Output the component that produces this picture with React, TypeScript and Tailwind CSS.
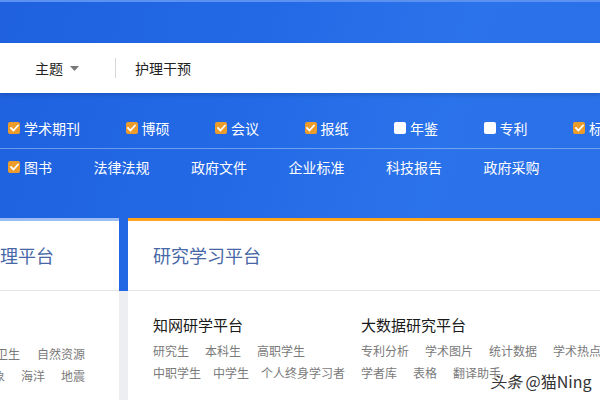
import React from "react";

const font = { fontFamily: '"Noto Sans CJK SC", "Noto Sans", sans-serif' };

function Check({ on }: { on: boolean }) {
  return on ? (
    <span className="flex h-[12px] w-[12px] items-center justify-center rounded-[2px] bg-[#ec9c2b]">
      <svg width="9" height="8" viewBox="0 0 9 8">
        <path d="M1 4 L3.5 6.5 L8 1.5" fill="none" stroke="#fff" strokeWidth="1.8" strokeLinecap="round" strokeLinejoin="round" />
      </svg>
    </span>
  ) : (
    <span className="h-[12px] w-[12px] rounded-[2px] bg-white" />
  );
}

const row1: [string, boolean][] = [
  ["学术期刊", true],
  ["博硕", true],
  ["会议", true],
  ["报纸", true],
  ["年鉴", false],
  ["专利", false],
  ["标准", true],
];

const row2: [string, boolean | null][] = [
  ["图书", true],
  ["法律法规", null],
  ["政府文件", null],
  ["企业标准", null],
  ["科技报告", null],
  ["政府采购", null],
];

export default function App() {
  return (
    <div className="relative h-[400px] w-[600px] overflow-hidden bg-[#eceef2]" style={font}>
      <div className="h-[291px] border-t-[2px] border-t-[#5b92f2] bg-[linear-gradient(105deg,#1f61df_0%,#2369e6_40%,#2b73ea_70%,#2a70e8_100%)] pt-[41px]">
        <div className="flex h-[50px] items-center bg-white shadow-[0_2px_4px_rgba(0,0,0,0.15)]">
          <span className="ml-[35px] text-[14px] text-[#222]">主题</span>
          <svg className="ml-[7px]" width="9" height="5" viewBox="0 0 9 5">
            <path d="M0 0 H9 L4.5 5 Z" fill="#777" />
          </svg>
          <span className="ml-[36px] h-[20px] w-px bg-[#d8d8d8]" />
          <span className="ml-[19px] text-[14px] text-[#222]">护理干预</span>
        </div>
        <div className="mt-[24px] flex h-[22px] items-center gap-[45.5px] whitespace-nowrap pl-[8px] text-[14px] text-white">
          {row1.map(([t, on]) => (
            <span key={t} className="flex shrink-0 items-center gap-[4px]">
              <Check on={on} />
              <span>{t}</span>
            </span>
          ))}
        </div>
        <div className="mt-[9px] h-px bg-[rgba(255,255,255,0.35)]" />
        <div className="mt-[7px] flex h-[22px] items-center gap-[41.5px] whitespace-nowrap pl-[8px] text-[14px] text-white">
          {row2.map(([t, on]) => (
            <span key={t} className="flex shrink-0 items-center gap-[4px]">
              {on !== null && <Check on={on} />}
              <span>{t}</span>
            </span>
          ))}
        </div>
      </div>

      <div className="-mt-[73px] flex h-[255px] gap-[9px]">
        <div className="w-[119px] shrink-0 overflow-hidden border-t-[3px] border-t-[#9cbdf4] bg-white">
          <div className="flex h-[70px] items-center border-b border-[#e2e4e8] whitespace-nowrap">
            <span className="-ml-[18px] text-[18px] text-[#4767a6]">管理平台</span>
          </div>
          <div className="pt-[52px] text-[12px] leading-[22px] text-[#7a7a7a] whitespace-nowrap">
            <div className="-ml-[4px] flex gap-[17px]">
              <span>卫生</span>
              <span>自然资源</span>
            </div>
            <div className="-ml-[19px] flex gap-[16px]">
              <span>气象</span>
              <span>海洋</span>
              <span>地震</span>
            </div>
          </div>
        </div>
        <div className="flex-1 border-t-[3px] border-t-[#ffa31a] bg-white">
          <div className="flex h-[70px] items-center border-b border-[#e2e4e8] pl-[25px]">
            <span className="text-[18px] text-[#4767a6]">研究学习平台</span>
          </div>
          <div className="flex pl-[25px] pt-[22px] whitespace-nowrap">
            <div className="w-[208px] shrink-0">
              <div className="text-[15px] leading-[24px] text-[#1a1a1a]">知网研学平台</div>
              <div className="mt-[3px] text-[12px] leading-[22px] text-[#7a7a7a]">
                <div className="flex gap-[16px]">
                  <span>研究生</span>
                  <span>本科生</span>
                  <span>高职学生</span>
                </div>
                <div className="flex gap-[12px]">
                  <span>中职学生</span>
                  <span>中学生</span>
                  <span>个人终身学习者</span>
                </div>
              </div>
            </div>
            <div className="shrink-0">
              <div className="text-[15px] leading-[24px] text-[#1a1a1a]">大数据研究平台</div>
              <div className="mt-[3px] text-[12px] leading-[22px] text-[#7a7a7a]">
                <div className="flex gap-[16px]">
                  <span>专利分析</span>
                  <span>学术图片</span>
                  <span>统计数据</span>
                  <span>学术热点</span>
                </div>
                <div className="flex gap-[16px]">
                  <span>学者库</span>
                  <span>表格</span>
                  <span>翻译助手</span>
                </div>
              </div>
            </div>
          </div>
        </div>
      </div>

      <div className="absolute left-[490px] top-[370px] whitespace-nowrap text-[16px] leading-[22px] text-[#333] [text-shadow:0_0_2px_#fff,0_0_2px_#fff,0_0_3px_#fff]">
        <span className="italic">头条</span> @猫Ning
      </div>
    </div>
  );
}
